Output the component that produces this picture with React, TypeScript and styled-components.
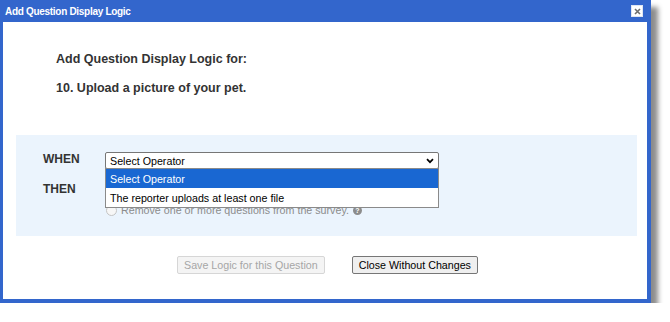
import styled, { createGlobalStyle } from 'styled-components';

const GlobalStyle = createGlobalStyle`
  html, body {
    margin: 0;
    padding: 0;
    background: #ffffff;
  }
  body {
    font-family: 'Liberation Sans', Arial, sans-serif;
  }
`;

const Dialog = styled.div`
  width: 651px;
  height: 303px;
  box-sizing: border-box;
  background: #3366cc;
  padding: 0 4px 4px 3px;
  display: flex;
  flex-direction: column;
  box-shadow: 7px 7px 5px rgba(0, 0, 0, 0.45);
`;

const TitleBar = styled.div`
  height: 22px;
  display: flex;
  align-items: center;
  justify-content: space-between;
  padding: 0 4px 0 2px;
  flex-shrink: 0;
`;

const TitleText = styled.span`
  color: #ffffff;
  font-size: 10px;
  font-weight: 700;
  letter-spacing: -0.3px;
`;

const CloseBox = styled.button`
  width: 12px;
  height: 12px;
  padding: 0;
  border: 1px solid #dfe6f3;
  background: #ffffff;
  display: flex;
  align-items: center;
  justify-content: center;
  cursor: pointer;
`;

const Body = styled.div`
  flex: 1;
  background: #ffffff;
  padding-top: 30px;
  display: flex;
  flex-direction: column;
`;

const Heading = styled.div<{ $gap?: number }>`
  padding-left: 53px;
  margin-bottom: ${(p) => p.$gap ?? 0}px;
  font-size: 12.5px;
  line-height: 15px;
  font-weight: 700;
  color: #333333;
`;

const Panel = styled.div`
  margin: 0 10px 0 13px;
  height: 101px;
  box-sizing: border-box;
  background: #ebf4fd;
  padding: 17px 0 0 27px;
  display: grid;
  grid-template-columns: 62px 334px;
  grid-template-rows: 17px auto;
`;

const RuleLabel = styled.div<{ $top?: number }>`
  padding-top: ${(p) => p.$top ?? 0}px;
  font-size: 12px;
  line-height: 14px;
  font-weight: 700;
  color: #333333;
`;

const SelectBox = styled.div`
  position: relative;
  height: 17px;
  box-sizing: border-box;
  border: 1px solid #767676;
  border-radius: 2px;
  background: #ffffff;
  display: flex;
  align-items: center;
  justify-content: space-between;
  padding: 0 4px 0 4px;
  font-size: 10.7px;
  color: #000000;
`;

const OptionList = styled.div`
  position: absolute;
  top: 100%;
  left: -1px;
  right: -1px;
  border: 1px solid #8a8a8a;
  background: #ffffff;
  z-index: 2;
`;

const Option = styled.div<{ $active?: boolean }>`
  height: 19px;
  line-height: 20px;
  padding-left: 4px;
  font-size: 10.7px;
  background: ${(p) => (p.$active ? '#1967d2' : '#ffffff')};
  color: ${(p) => (p.$active ? '#ffffff' : '#000000')};
`;

const ThenCell = styled.div`
  padding-top: 34px;
`;

const RadioRow = styled.label`
  display: flex;
  align-items: center;
  gap: 4px;
  height: 14px;
  font-size: 10.7px;
  color: #8c8c8c;
`;

const Radio = styled.span`
  width: 9px;
  height: 9px;
  margin-left: 1px;
  border-radius: 50%;
  border: 1px solid #c4c4c4;
  background: #f7f7f7;
`;

const HelpDot = styled.span`
  width: 9px;
  height: 9px;
  border-radius: 50%;
  background: #8c8c8c;
  color: #ffffff;
  font-size: 7px;
  line-height: 9px;
  text-align: center;
  font-weight: 700;
`;

const ButtonRow = styled.div`
  margin-top: 20px;
  padding-left: 5px;
  display: flex;
  justify-content: center;
  gap: 27px;
`;

const Button = styled.button`
  height: 18px;
  box-sizing: border-box;
  padding: 0 6px;
  font-family: 'Liberation Sans', Arial, sans-serif;
  font-size: 10.7px;
  border-radius: 2px;
  border: 1px solid #767676;
  background: #efefef;
  color: #000000;

  &:disabled {
    border-color: #d6d6d6;
    background: #f4f4f4;
    color: #a6a6a6;
  }
`;

export default function App() {
  return (
    <>
      <GlobalStyle />
      <Dialog>
        <TitleBar>
          <TitleText>Add Question Display Logic</TitleText>
          <CloseBox aria-label="Close">
            <svg width="7" height="7" viewBox="0 0 7 7">
              <path d="M1 1L6 6M6 1L1 6" stroke="#6d6d6d" strokeWidth="1.6" />
            </svg>
          </CloseBox>
        </TitleBar>
        <Body>
          <Heading $gap={14}>Add Question Display Logic for:</Heading>
          <Heading $gap={39}>10. Upload a picture of your pet.</Heading>
          <Panel>
            <RuleLabel>WHEN</RuleLabel>
            <SelectBox>
              <span>Select Operator</span>
              <svg width="8" height="6" viewBox="0 0 8 6">
                <path d="M1 1.2L4 4.2L7 1.2" stroke="#000" strokeWidth="1.7" fill="none" />
              </svg>
              <OptionList>
                <Option $active>Select Operator</Option>
                <Option>The reporter uploads at least one file</Option>
              </OptionList>
            </SelectBox>
            <RuleLabel $top={13}>THEN</RuleLabel>
            <ThenCell>
              <RadioRow>
                <Radio />
                <span>Remove one or more questions from the survey.</span>
                <HelpDot>?</HelpDot>
              </RadioRow>
            </ThenCell>
          </Panel>
          <ButtonRow>
            <Button disabled>Save Logic for this Question</Button>
            <Button>Close Without Changes</Button>
          </ButtonRow>
        </Body>
      </Dialog>
    </>
  );
}
